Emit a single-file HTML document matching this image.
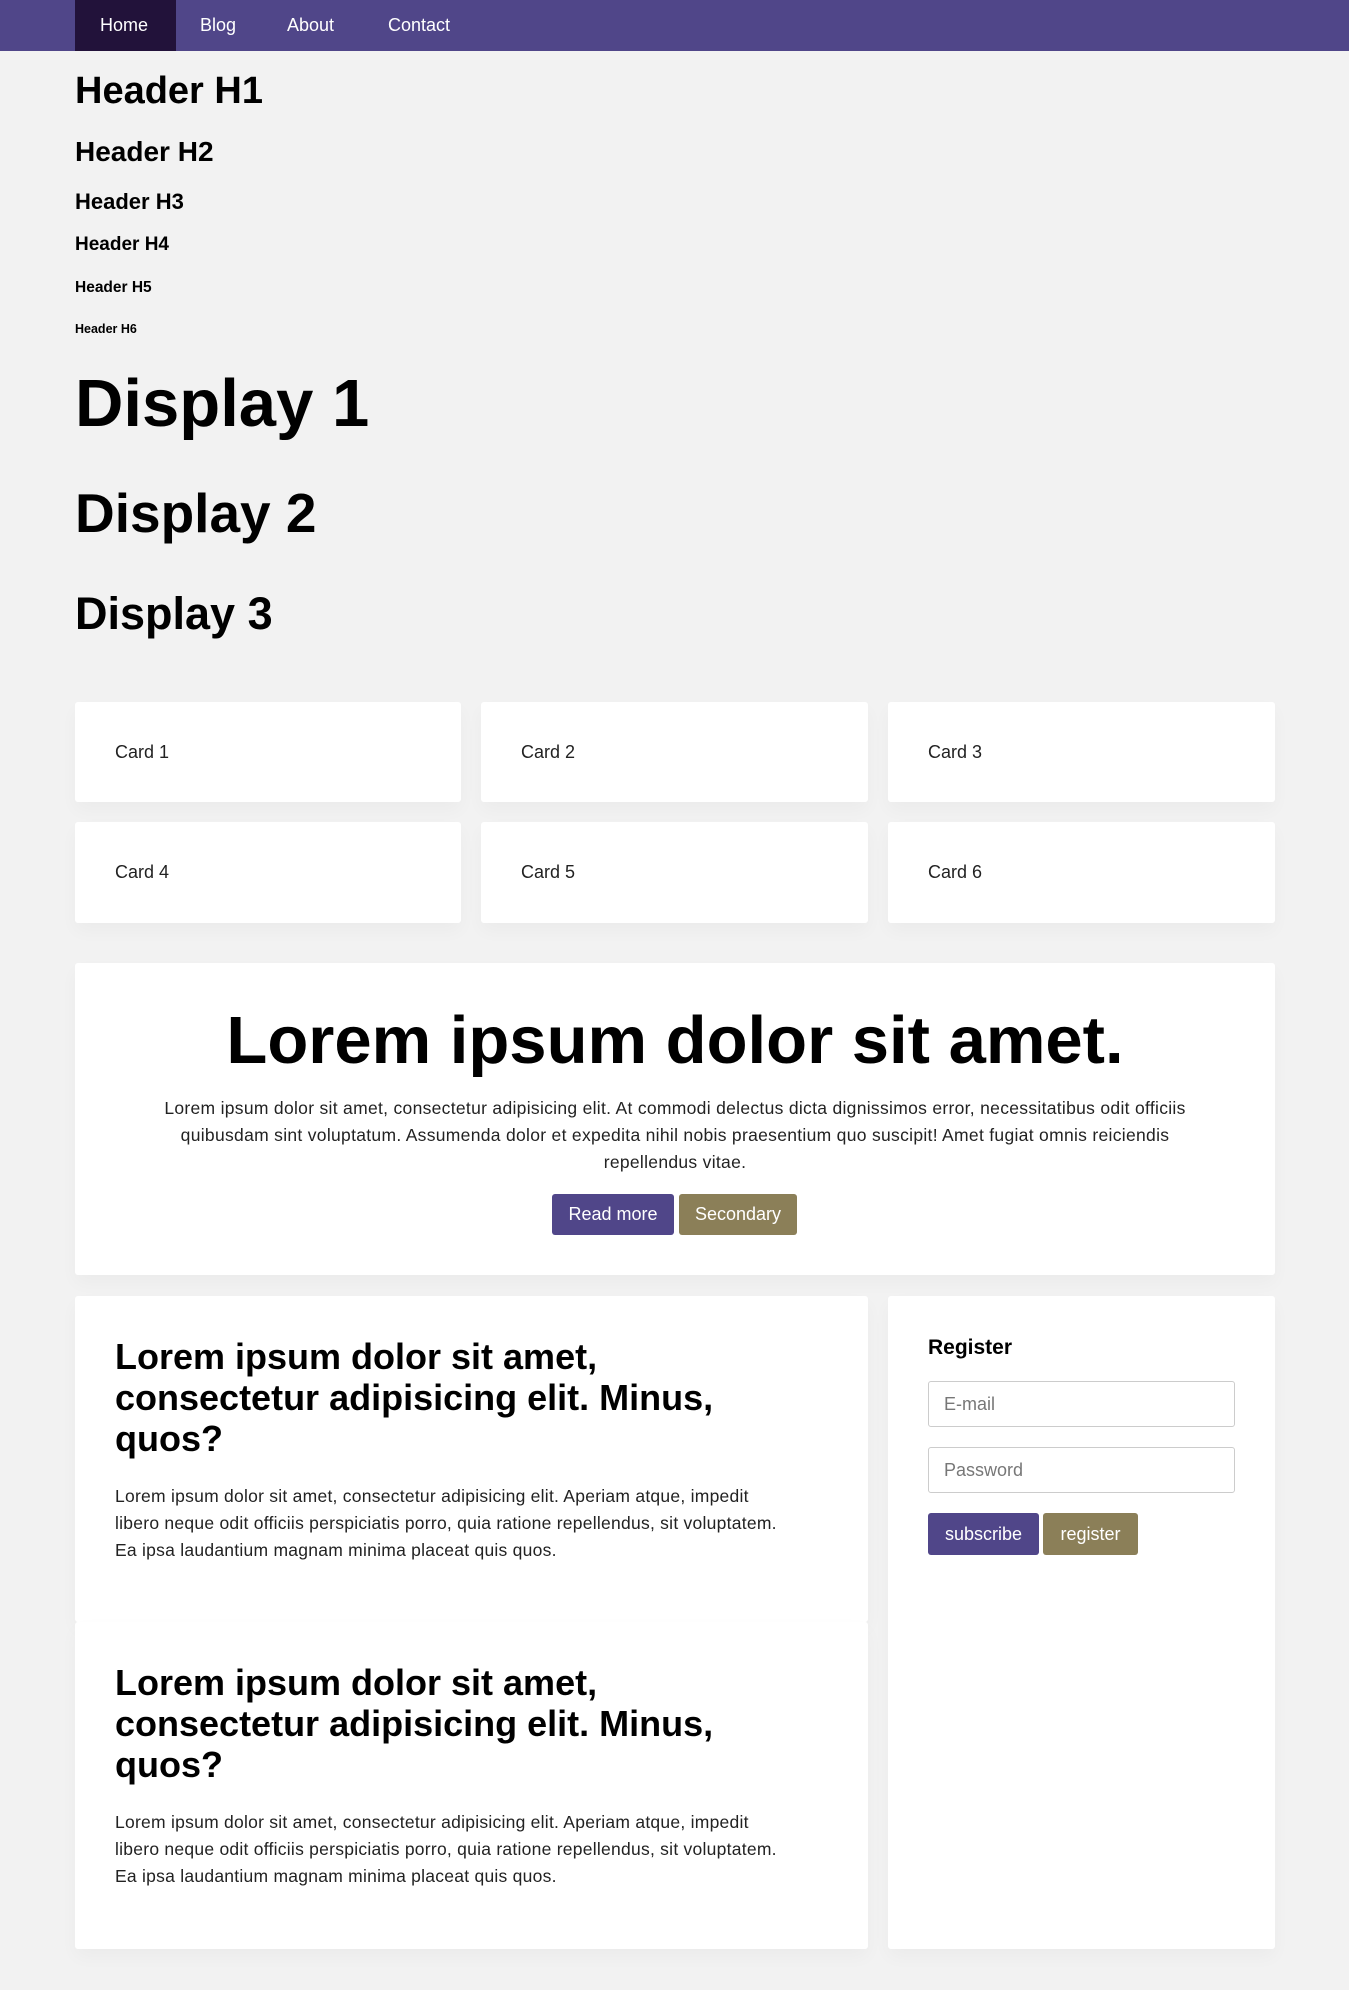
<!DOCTYPE html>
<html><head><meta charset="utf-8"><style>
*{margin:0;padding:0;box-sizing:border-box}
body{width:1349px;height:1990px;background:#f2f2f2;font-family:"Liberation Sans",sans-serif;color:#111;position:relative;overflow:hidden}
.nav{position:absolute;left:0;top:0;width:1349px;height:51px;background:#504689}
.nav a{position:absolute;top:0;height:51px;line-height:51px;color:#fff;font-size:18px;text-decoration:none}
.abs{position:absolute;left:75px;white-space:nowrap;font-weight:bold;color:#000}
.card{position:absolute;background:#fff;border-radius:3px;box-shadow:0 8px 18px rgba(0,0,0,0.03)}
.ct{position:absolute;left:40px;top:0;line-height:100px;font-size:18px;color:#222}
.btn{position:absolute;color:#fff;font-size:18px;text-align:center;border-radius:3px}
.inp{position:absolute;left:40px;width:307px;height:46px;border:1px solid #ccc;border-radius:3px;font-size:18px;color:#777;line-height:44px;padding-left:15px}
.art h2{position:absolute;left:40px;width:720px;font-size:36px;line-height:41px;color:#000;white-space:nowrap}
.art p{position:absolute;left:40px;width:740px;font-size:17.5px;line-height:27px;color:#222;white-space:nowrap;letter-spacing:0.25px}
</style></head><body>
<div class="nav">
<div style="position:absolute;left:75px;top:0;width:101px;height:51px;background:#22123a"></div>
<a style="left:100px">Home</a><a style="left:200px">Blog</a><a style="left:287px">About</a><a style="left:388px">Contact</a>
</div>
<div class="abs" style="top:70px;height:42px;line-height:42px;font-size:38px">Header H1</div>
<div class="abs" style="top:136px;height:32px;line-height:32px;font-size:28px">Header H2</div>
<div class="abs" style="top:189px;height:26px;line-height:26px;font-size:22px">Header H3</div>
<div class="abs" style="top:234px;height:22px;line-height:22px;font-size:19px">Header H4</div>
<div class="abs" style="top:279px;height:18px;line-height:18px;font-size:15.5px">Header H5</div>
<div class="abs" style="top:321px;height:16px;line-height:16px;font-size:12.5px">Header H6</div>
<div class="abs" style="top:362px;height:84px;line-height:84px;font-size:67px">Display 1</div>
<div class="abs" style="top:481px;height:64px;line-height:64px;font-size:55px">Display 2</div>
<div class="abs" style="top:589px;height:50px;line-height:50px;font-size:45px">Display 3</div>

<div class="card" style="left:75px;top:702px;width:386px;height:100px"><div class="ct">Card 1</div></div>
<div class="card" style="left:481px;top:702px;width:387px;height:100px"><div class="ct">Card 2</div></div>
<div class="card" style="left:888px;top:702px;width:387px;height:100px"><div class="ct">Card 3</div></div>
<div class="card" style="left:75px;top:822px;width:386px;height:101px"><div class="ct">Card 4</div></div>
<div class="card" style="left:481px;top:822px;width:387px;height:101px"><div class="ct">Card 5</div></div>
<div class="card" style="left:888px;top:822px;width:387px;height:101px"><div class="ct">Card 6</div></div>

<div class="card" style="left:75px;top:963px;width:1200px;height:312px">
<div style="position:absolute;left:0;top:42px;width:1200px;text-align:center;font-weight:bold;font-size:67px;line-height:72px;color:#000">Lorem ipsum dolor sit amet.</div>
<div style="position:absolute;left:0;top:132px;width:1200px;text-align:center;font-size:17.5px;line-height:27px;color:#222;white-space:nowrap;letter-spacing:0.3px">Lorem ipsum dolor sit amet, consectetur adipisicing elit. At commodi delectus dicta dignissimos error, necessitatibus odit officiis<br>quibusdam sint voluptatum. Assumenda dolor et expedita nihil nobis praesentium quo suscipit! Amet fugiat omnis reiciendis<br>repellendus vitae.</div>
<div class="btn" style="left:477px;top:231px;width:122px;height:41px;line-height:41px;background:#504689">Read more</div>
<div class="btn" style="left:604px;top:231px;width:118px;height:41px;line-height:41px;background:#8b7f58">Secondary</div>
</div>

<div class="card art" style="left:75px;top:1296px;width:793px;height:326px">
<h2 style="top:40px">Lorem ipsum dolor sit amet,<br>consectetur adipisicing elit. Minus,<br>quos?</h2>
<p style="top:187px">Lorem ipsum dolor sit amet, consectetur adipisicing elit. Aperiam atque, impedit<br>libero neque odit officiis perspiciatis porro, quia ratione repellendus, sit voluptatem.<br>Ea ipsa laudantium magnam minima placeat quis quos.</p>
</div>
<div class="card art" style="left:75px;top:1622px;width:793px;height:327px">
<h2 style="top:40px">Lorem ipsum dolor sit amet,<br>consectetur adipisicing elit. Minus,<br>quos?</h2>
<p style="top:187px">Lorem ipsum dolor sit amet, consectetur adipisicing elit. Aperiam atque, impedit<br>libero neque odit officiis perspiciatis porro, quia ratione repellendus, sit voluptatem.<br>Ea ipsa laudantium magnam minima placeat quis quos.</p>
</div>

<div class="card" style="left:888px;top:1296px;width:387px;height:653px">
<div style="position:absolute;left:40px;top:38px;font-weight:bold;font-size:21px;line-height:28px;color:#000">Register</div>
<div class="inp" style="top:85px">E-mail</div>
<div class="inp" style="top:151px">Password</div>
<div class="btn" style="left:40px;top:217px;width:111px;height:42px;line-height:42px;background:#504689">subscribe</div>
<div class="btn" style="left:155px;top:217px;width:95px;height:42px;line-height:42px;background:#8b7f58">register</div>
</div>
</body></html>
